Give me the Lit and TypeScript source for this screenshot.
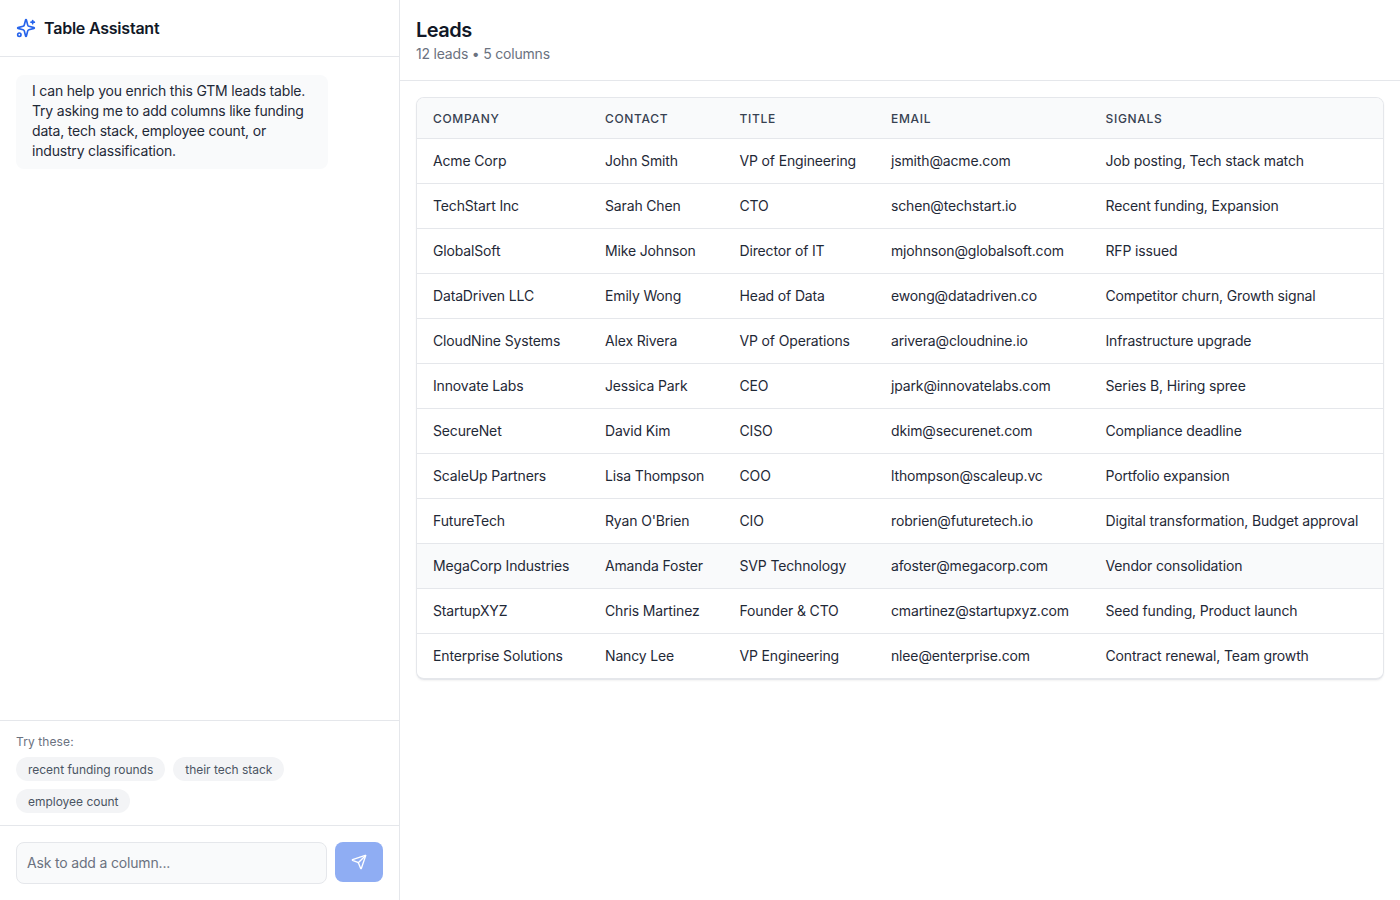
import { LitElement, html, css } from "lit";
import { customElement } from "lit/decorators.js";

const rows = [
  ["Acme Corp", "John Smith", "VP of Engineering", "jsmith@acme.com", "Job posting, Tech stack match"],
  ["TechStart Inc", "Sarah Chen", "CTO", "schen@techstart.io", "Recent funding, Expansion"],
  ["GlobalSoft", "Mike Johnson", "Director of IT", "mjohnson@globalsoft.com", "RFP issued"],
  ["DataDriven LLC", "Emily Wong", "Head of Data", "ewong@datadriven.co", "Competitor churn, Growth signal"],
  ["CloudNine Systems", "Alex Rivera", "VP of Operations", "arivera@cloudnine.io", "Infrastructure upgrade"],
  ["Innovate Labs", "Jessica Park", "CEO", "jpark@innovatelabs.com", "Series B, Hiring spree"],
  ["SecureNet", "David Kim", "CISO", "dkim@securenet.com", "Compliance deadline"],
  ["ScaleUp Partners", "Lisa Thompson", "COO", "lthompson@scaleup.vc", "Portfolio expansion"],
  ["FutureTech", "Ryan O'Brien", "CIO", "robrien@futuretech.io", "Digital transformation, Budget approval"],
  ["MegaCorp Industries", "Amanda Foster", "SVP Technology", "afoster@megacorp.com", "Vendor consolidation"],
  ["StartupXYZ", "Chris Martinez", "Founder & CTO", "cmartinez@startupxyz.com", "Seed funding, Product launch"],
  ["Enterprise Solutions", "Nancy Lee", "VP Engineering", "nlee@enterprise.com", "Contract renewal, Team growth"],
];
const headers = ["Company", "Contact", "Title", "Email", "Signals"];
const chips = ["recent funding rounds", "their tech stack", "employee count"];

@customElement("app-root")
export class AppRoot extends LitElement {
  static styles = css`
    :host {
      display: flex;
      width: 1400px;
      height: 900px;
      overflow: hidden;
      background: #fff;
      font-family: Inter, "Liberation Sans", sans-serif;
      color: #111827;
      font-size: 14px;
    }
    * { box-sizing: border-box; }
    .side {
      width: 400px;
      flex: none;
      border-right: 1px solid #e5e7eb;
      display: flex;
      flex-direction: column;
      height: 100%;
    }
    .side-head {
      height: 57px;
      flex: none;
      display: flex;
      align-items: center;
      gap: 8px;
      padding: 0 16px;
      border-bottom: 1px solid #e5e7eb;
    }
    .side-head svg { width: 20px; height: 20px; color: #2563eb; flex: none; }
    .side-head h2 { margin: 0; font-size: 16px; font-weight: 600; line-height: 24px; color: #111827; letter-spacing: -0.22px; }
    .messages { flex: 1; padding: 18px 16px 16px; min-height: 0; }
    .bubble {
      width: 312px;
      padding: 6px 16px 8px;
      background: #f9fafb;
      border-radius: 8px;
      font-size: 14px;
      line-height: 20px;
      color: #1f2937;
      letter-spacing: -0.19px;
    }
    .suggest {
      flex: none;
      height: 105px;
      border-top: 1px solid #e5e7eb;
      padding: 13px 16px 0;
    }
    .suggest .label { font-size: 12px; line-height: 16px; color: #6b7280; margin-bottom: 7px; letter-spacing: 0.1px; }
    .chips { display: flex; flex-wrap: wrap; gap: 8px; }
    .chip {
      height: 24px;
      padding: 0 12px;
      display: flex;
      align-items: center;
      background: #f3f4f6;
      border-radius: 999px;
      font-size: 12px;
      color: #4b5563;
      letter-spacing: -0.02px;
    }
    .composer {
      flex: none;
      height: 75px;
      border-top: 1px solid #e5e7eb;
      padding: 16px;
      display: flex;
      gap: 8px;
      align-items: flex-start;
    }
    .input {
      flex: 1;
      height: 42px;
      display: flex;
      align-items: center;
      padding: 0 10px 2px;
      background: #f9fafb;
      border: 1px solid #e5e7eb;
      border-radius: 8px;
      font-size: 14px;
      color: #6b7280;
      letter-spacing: -0.17px;
    }
    .send {
      width: 48px;
      height: 40px;
      flex: none;
      background: #8fadf3;
      border-radius: 8px;
      display: flex;
      align-items: center;
      justify-content: center;
      color: #fff;
    }
    .send svg { width: 16px; height: 16px; }
    .main { flex: 1; min-width: 0; display: flex; flex-direction: column; }
    .main-head {
      height: 81px;
      flex: none;
      padding: 16px 16px 0;
      border-bottom: 1px solid #e5e7eb;
    }
    .main-head h1 { margin: 0; font-size: 20px; font-weight: 600; line-height: 28px; color: #111827; letter-spacing: -0.5px; }
    .main-head p { margin: 0; font-size: 14px; line-height: 20px; color: #6b7280; letter-spacing: -0.2px; }
    .content { padding: 16px; }
    .wrap {
      border: 1px solid #e5e7eb;
      border-bottom-width: 2px;
      border-radius: 8px;
      overflow: hidden;
      box-shadow: 0 1px 2px rgba(0, 0, 0, 0.05);
    }
    table { width: 100%; table-layout: fixed; border-collapse: collapse; font-size: 14px; }
    .c1 { width: 172px; }
    .c2 { width: 134.5px; }
    .c3 { width: 151.5px; }
    .c4 { width: 214.5px; }
    th {
      height: 40px;
      padding: 1px 16px 0;
      text-align: left;
      background: #f9fafb;
      border-bottom: 1px solid #e5e7eb;
      font-size: 12px;
      font-weight: 500;
      letter-spacing: 0.68px;
      text-transform: uppercase;
      color: #374151;
      white-space: nowrap;
    }
    td {
      height: 45px;
      padding: 0 16px;
      border-bottom: 1px solid #e5e7eb;
      color: #1f2937;
      white-space: nowrap;
      letter-spacing: -0.15px;
    }
    tr:last-child td { border-bottom: none; }
    tr.hover td { background: #f9fafb; }
  `;

  render() {
    return html`
      <aside class="side">
        <div class="side-head">
          <svg viewBox="0 0 24 24" fill="none" stroke="currentColor" stroke-width="2" stroke-linecap="round" stroke-linejoin="round">
            <path d="M9.937 15.5A2 2 0 0 0 8.5 14.063l-6.135-1.582a.5.5 0 0 1 0-.962L8.5 9.936A2 2 0 0 0 9.937 8.5l1.582-6.135a.5.5 0 0 1 .963 0L14.063 8.5A2 2 0 0 0 15.5 9.937l6.135 1.581a.5.5 0 0 1 0 .964L15.5 14.063a2 2 0 0 0-1.437 1.437l-1.582 6.135a.5.5 0 0 1-.963 0z"/>
            <path d="M20 3v4"/><path d="M22 5h-4"/><circle cx="4" cy="20" r="2"/>
          </svg>
          <h2>Table Assistant</h2>
        </div>
        <div class="messages">
          <div class="bubble">I can help you enrich this GTM leads table. Try asking me to add columns like funding data, tech stack, employee count, or industry classification.</div>
        </div>
        <div class="suggest">
          <div class="label">Try these:</div>
          <div class="chips">${chips.map((c) => html`<span class="chip">${c}</span>`)}</div>
        </div>
        <div class="composer">
          <div class="input">Ask to add a column...</div>
          <div class="send">
            <svg viewBox="0 0 24 24" fill="none" stroke="currentColor" stroke-width="2" stroke-linecap="round" stroke-linejoin="round">
              <path d="M14.536 21.686a.5.5 0 0 0 .937-.024l6.5-19a.496.496 0 0 0-.635-.635l-19 6.5a.5.5 0 0 0-.024.937l7.93 3.18a2 2 0 0 1 1.112 1.11z"/>
              <path d="m21.854 2.147-10.94 10.939"/>
            </svg>
          </div>
        </div>
      </aside>
      <main class="main">
        <div class="main-head">
          <h1>Leads</h1>
          <p>12 leads • 5 columns</p>
        </div>
        <div class="content">
          <div class="wrap">
            <table>
              <colgroup><col class="c1" /><col class="c2" /><col class="c3" /><col class="c4" /><col /></colgroup>
              <thead><tr>${headers.map((h) => html`<th>${h}</th>`)}</tr></thead>
              <tbody>
                ${rows.map((r, i) => html`<tr class=${i === 9 ? "hover" : ""}>${r.map((c) => html`<td>${c}</td>`)}</tr>`)}
              </tbody>
            </table>
          </div>
        </div>
      </main>
    `;
  }
}
